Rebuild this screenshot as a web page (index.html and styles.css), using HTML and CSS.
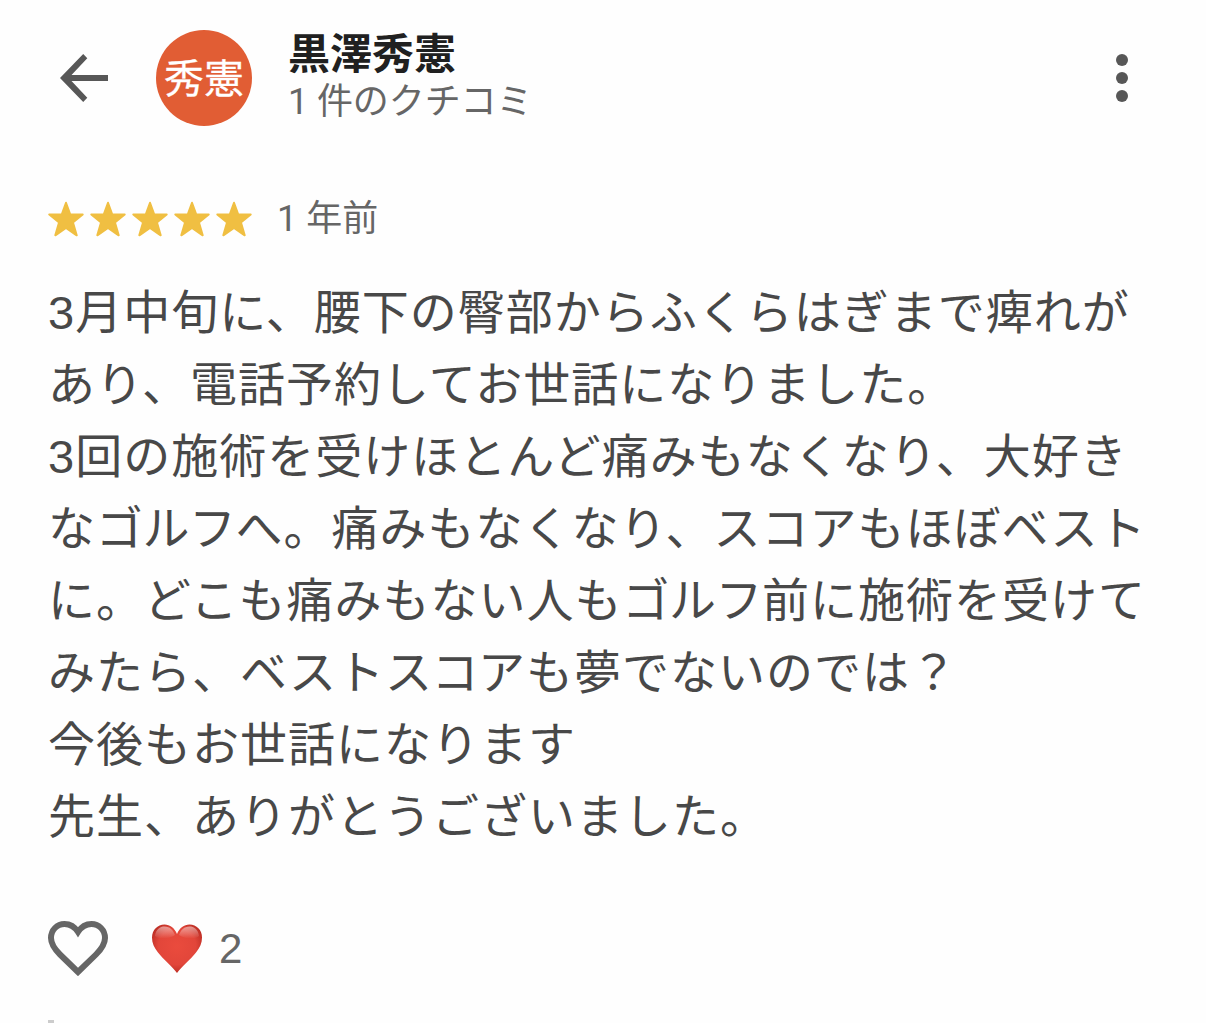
FILE: index.html
```html
<!DOCTYPE html>
<html lang="ja">
<head>
  <meta charset="UTF-8">
  <meta name="viewport" content="width=device-width, initial-scale=1.0">
  <title>クチコミ</title>
  <link rel="stylesheet" href="styles.css">
</head>
<body>
  <div class="review">
    <header class="header">
      <button class="icon-btn back" aria-label="戻る">
        <svg width="48" height="48" viewBox="0 0 48 48">
          <path d="M48 21H11.5L27.3 4.2 23.2 0 0 24l23.2 24 4.1-4.2L11.5 27H48z" fill="#575757"/>
        </svg>
      </button>
      <div class="avatar">秀憲</div>
      <div class="author">
        <h1 class="name">黒澤秀憲</h1>
        <p class="count">1 件のクチコミ</p>
      </div>
      <button class="icon-btn menu" aria-label="メニュー">
        <svg width="12" height="48" viewBox="0 0 12 48" fill="#575757">
          <circle cx="6" cy="6" r="6"/>
          <circle cx="6" cy="24" r="6"/>
          <circle cx="6" cy="42" r="6"/>
        </svg>
      </button>
    </header>

    <div class="rating">
      <svg class="stars" width="204" height="36" viewBox="0 0 204 36">
        <defs>
          <path id="star" d="M18 1.8l4.1 11.4 12.6.2-9.8 8 3.8 12.9L18 27 7.3 34.3l3.8-12.9-9.8-8 12.6-.2z" fill="#f0bf42" stroke="#f0bf42" stroke-width="2" stroke-linejoin="round"/>
        </defs>
        <use href="#star"/>
        <use href="#star" x="42"/>
        <use href="#star" x="84"/>
        <use href="#star" x="126"/>
        <use href="#star" x="168"/>
      </svg>
      <span class="date">1 年前</span>
    </div>

    <p class="text">
      3月中旬に、腰下の臀部からふくらはぎまで痺れが<br>
      あり、電話予約してお世話になりました。<br>
      3回の施術を受けほとんど痛みもなくなり、大好き<br>
      な<span class="kern">ゴルフ</span>へ。痛みもなくなり、スコアもほぼベスト<br>
      に。どこも痛みもない人も<span class="kern">ゴルフ</span>前に施術を受けて<br>
      みたら、ベスト<span class="kern">スコ</span>アも夢でないのでは？<br>
      今後もお世話になります<br>
      先生、ありがとうございました。
    </p>

    <footer class="reactions">
      <button class="icon-btn" aria-label="いいね">
        <svg width="60" height="55" viewBox="0 0 60 55">
          <path d="M30 51L12 33.5C6 27.5 3 23 3 17 3 9 9 3 16.5 3 22 3 26.5 5.5 30 11 33.5 5.5 38 3 43.5 3 51 3 57 9 57 17c0 6-3 10.5-9 16.5z" fill="none" stroke="#666" stroke-width="6"/>
        </svg>
      </button>
      <svg class="heart" width="50" height="50" viewBox="0 0 50 50">
        <defs>
          <radialGradient id="red" cx="50%" cy="45%" r="58%">
            <stop offset="0" stop-color="#ea4b3d"/>
            <stop offset=".65" stop-color="#e2463a"/>
            <stop offset="1" stop-color="#b92b22"/>
          </radialGradient>
          <linearGradient id="shine" x1="0" y1="0" x2="0" y2="1">
            <stop offset="0" stop-color="#fff" stop-opacity=".5"/>
            <stop offset="1" stop-color="#fff" stop-opacity="0"/>
          </linearGradient>
        </defs>
        <path d="M25 49C20 42 12 36 6 28.5 2 23.5 0 19 0 13.5 0 6 5.5.5 12.5.5 18 .5 22.5 4 25 10 27.5 4 32 .5 37.5.5 44.5.5 50 6 50 13.5c0 5.5-2 10-6 15C38 36 30 42 25 49z" fill="url(#red)"/>
        <path d="M3 12C4 5 8 2.5 12.500 2.500 18 2.500 21 6 23 11 17 15 8 16 3 12zM47 12C46 5 42 2.500 37.500 2.500 32 2.500 29 6 27 11c6 4 15 5 20 1z" fill="url(#shine)"/>
      </svg>
      <span class="likes">2</span>
    </footer>
    <div class="next"></div>
  </div>
</body>
</html>
```

FILE: styles.css
```css
* {
  box-sizing: border-box;
}

body {
  margin: 0;
  background: #fefefe;
  font-family: "Liberation Sans", "Noto Sans CJK JP", sans-serif;
  color: #666;
}

.review {
  height: 1023px;
  padding: 30px 48px 0;
  overflow: hidden;
}

.header {
  display: flex;
  align-items: center;
  height: 96px;
  padding: 0 30px 0 12px;
}

.icon-btn {
  display: flex;
  padding: 0;
  border: none;
  background: none;
}

.avatar {
  width: 96px;
  height: 96px;
  margin: 0 36px 0 48px;
  border-radius: 50%;
  background: #e15d34;
  color: #fff;
  font-size: 40px;
  line-height: 98px;
  text-align: center;
  -webkit-text-stroke: 0.3px #fff;
}

.author {
  height: 96px;
  padding-top: 1px;
}

.name {
  margin: 0;
  color: #202020;
  font-size: 42px;
  font-weight: 700;
  line-height: 48px;
}

.count {
  margin: 0;
  font-family: Roboto, "Noto Sans CJK JP", sans-serif;
  font-size: 36px;
  letter-spacing: -0.1px;
  line-height: 46px;
}

.menu {
  margin-left: auto;
}

.rating {
  display: flex;
  align-items: center;
  gap: 25px;
  height: 48px;
  margin-top: 69px;
}

.date {
  font-family: Roboto, "Noto Sans CJK JP", sans-serif;
  font-size: 36px;
  line-height: 48px;
}

.text {
  margin: 34px 0 0;
  color: #484848;
  font-size: 47px;
  letter-spacing: 1px;
  line-height: 72px;
  white-space: nowrap;
}

.kern {
  letter-spacing: -0.5px;
}

.reactions {
  display: flex;
  align-items: center;
  height: 60px;
  margin-top: 65px;
}

.heart {
  margin: 1px 17px 0 44px;
}

.likes {
  padding-top: 2px;
  font-size: 42px;
  line-height: 60px;
}

.next {
  width: 6px;
  height: 3px;
  margin-top: 42px;
  background: #ccc;
}
```
